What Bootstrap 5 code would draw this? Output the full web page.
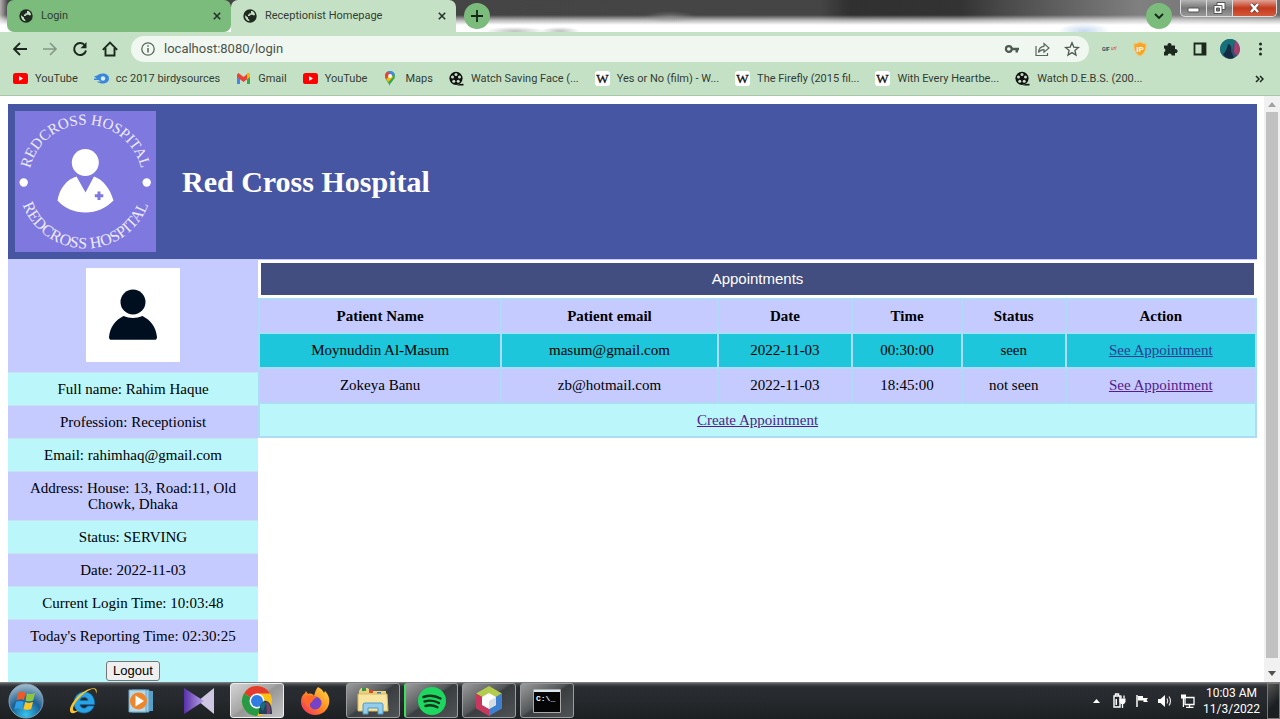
<!DOCTYPE html>
<html lang="en">
<head>
<meta charset="utf-8">
<meta name="viewport" content="width=device-width, initial-scale=1">
<title>Receptionist Homepage</title>
<link href="https://cdn.jsdelivr.net/npm/bootstrap@5.3.0/dist/css/bootstrap.min.css" rel="stylesheet">
<style>
body{font-family:Roboto,"Noto Sans",sans-serif;font-size:11px;line-height:16px;color:#333c34;background:#fff}
button{border:0;background:none;padding:0;color:inherit}
svg{display:block;flex:none}
.tabstrip{height:32px;padding-left:7px;background:
 radial-gradient(ellipse 26px 6px at 670px 17px,#9998,transparent),
 radial-gradient(ellipse 26px 8px at 1084px 31px,#a9c6e8aa,transparent),
 radial-gradient(ellipse 30px 4px at 515px 31px,#8888,transparent),
 radial-gradient(ellipse 20px 4px at 560px 31px,#8888,transparent),
 linear-gradient(#0000 15px,#fff9 20px,#fff 25px),
 linear-gradient(90deg,#b5b0b0 0,#444 8px,#454545 820px,#303030 850px,#333 960px,#484848 1000px,#808080 1140px,#6a6a6a)}
.tab-item{width:224px;height:32px;padding:0 10px 0 12px;border-radius:7px 7px 0 0}
.tab-item.idle{background:#7bbb7c;border-radius:7px}
.tab-item.current{background:#c5e1c5;width:225px}
.round-btn{width:26px;height:26px;border-radius:50%;background:#7bbb7c;margin-top:3px}
.win-btns{height:17px;border:1px solid #ddd;border-top:0;border-radius:0 0 5px 5px;overflow:hidden;background:linear-gradient(#b5b5b5,#777 50%,#999);margin-right:3px}
.win-btns button{width:26px;border-right:1px solid #ddd}
.win-btns .close-win{width:43px;border:0;background:linear-gradient(#e0a397,#c4391c 50%,#d2593a)}
.chrome-bar{background:#c5e1c5}
.toolbar{height:34px;padding:0 12px}
.omni{height:26px;border-radius:13px;background:#f0f7f1;padding:0 9px 0 9px;margin:0 13px 0 13px}
.omni input{border:0;background:none;outline:0;padding:0;font-size:13px;color:#4b554c;min-width:0}
.gap-14{gap:14px}.gap-7{gap:7px}
.marks{height:30px;padding:0 16px 4px 13px;border-bottom:1px solid #a9c4aa;gap:16px}
.marks a{color:inherit;text-decoration:none;white-space:nowrap}
.viewport{min-height:0}
.doc{padding:8px 7px 0 8px;font-family:"Liberation Serif",serif;font-size:15px;color:#000;overflow:hidden;min-width:0}
.masthead{background:#4756a2;padding:7px;gap:26px;border-bottom:1px solid #c5caff}
.masthead h1{font-size:30px;font-weight:700;line-height:34px;color:#fff;margin:0}
.side{width:250px;flex:none;text-align:center}
.side li{line-height:16px;padding:8px 16px;background:#bbf6fa;border-bottom:1px solid #c8e2ef}
.side li:nth-child(odd){background:#c5caff}
.side li.photo{padding:8px 0 10px}
.side li.exit{background:#bbf6fa}
.side .logout{font:13px/18px "Liberation Sans",sans-serif;border:1px solid #767676;border-radius:3px;background:#efefef;padding:0 6px;color:#000;display:block;margin:0 auto}
.bar-title{font:15px/32px "Liberation Sans",sans-serif;color:#fff;background:#434e80;margin:3px 3px 3px}
.appt{width:100%;border-collapse:collapse;table-layout:fixed;text-align:center}
.appt th,.appt td{border:2px solid #aedcf7;background:#c5caff;height:35px;padding:0;line-height:17px;vertical-align:middle;text-align:center}
.appt th,.appt tfoot td{height:34px}
.appt .seen td{background:#1dc6da}
.appt tfoot td{background:#bbf6fa}
.appt a{color:#551a8b;text-decoration:underline}
.appt .seen a{color:#2b3c92}
.scroller{width:16px;flex:none;background:#f1f1f1;padding:6px 2px 6px;gap:5px}
.scroller .thumb{background:#c1c1c1}
.taskbar{height:37px;background:linear-gradient(#8b8e90 0,#4a4d50 2px,#292c30 5px,#26292d 50%,#1d2023);gap:4px}
.task{width:54px;height:37px}
.task.start{width:52px}
.task.open{height:35px;border:1px solid #9a9c9e;border-radius:3px;background:linear-gradient(145deg,#9a9b9c,#55585a 45%,#3b3e41 50%,#505356)}
.task.front{background:linear-gradient(145deg,#d4d4d4,#a6a6a6 45%,#969696 50%,#c4c4c4);border-color:#eee}
.task.edge{border-left:2px solid #3ce05c}
.tray{gap:7px;color:#fff}
.clock{font-size:12px;line-height:16px;width:57px}
.show-desk{width:13px;height:36px;border:1px solid #777;background:linear-gradient(135deg,#555,#1c1f22 60%)}
</style>
</head>
<body class="vh-100 d-flex flex-column overflow-hidden">
<svg width="0" height="0" class="position-absolute" aria-hidden="true">
<defs>
<symbol id="globe" viewBox="0 0 14 14"><circle cx="7" cy="7" r="6.700" fill="#1f2a20"/><path d="M2 6.200 5 8.600v1.200l1.300 1v1.400C3.500 11.800 1.900 9.500 2 6.200zM8 2h1.500c1.500.8 2.500 2.300 2.500 4l-1.300.6-1.200-.8H7.800L6.500 7H5V5.500h1.300V4.300H8z" fill="#c5e1c5"/></symbol>
<symbol id="cross" viewBox="0 0 8 8"><path d="m.8.8 6.400 6.400M7.200.8.8 7.200" stroke="#26332a" stroke-width="1.600"/></symbol>
<symbol id="yt" viewBox="0 0 15 15"><rect y="2" width="15" height="11" rx="2.600" fill="#f00"/><path d="m6 5 4 2.500L6 10z" fill="#fff"/></symbol>
<symbol id="film" viewBox="0 0 15 15"><circle cx="7" cy="7.300" r="6.600" fill="#111"/><path d="M8 14.500h6.500v-1.800l-4 .4z" fill="#111"/><g fill="#c5e1c5"><circle cx="7" cy="3.500" r="1.500"/><circle cx="3.500" cy="6" r="1.500"/><circle cx="10.500" cy="6" r="1.500"/><circle cx="4.800" cy="10.200" r="1.500"/><circle cx="9.200" cy="10.200" r="1.500"/></g></symbol>
<symbol id="wiki" viewBox="0 0 15 15"><rect width="15" height="15" rx="3" fill="#fff"/><text x="7.500" y="12" text-anchor="middle" font-family="Liberation Serif, serif" font-size="13" fill="#111" stroke="#111" stroke-width=".3">W</text></symbol>
</defs></svg>

<div class="tabstrip d-flex align-items-start">
  <div class="tab-item idle d-flex align-items-center"><svg width="14" height="14"><use href="#globe"/></svg><span class="ms-2 me-auto">Login</span><button aria-label="Close Login"><svg width="8" height="8"><use href="#cross"/></svg></button></div>
  <div class="tab-item current d-flex align-items-center"><svg width="14" height="14"><use href="#globe"/></svg><span class="ms-2 me-auto">Receptionist Homepage</span><button aria-label="Close Receptionist Homepage"><svg width="8" height="8"><use href="#cross"/></svg></button></div>
  <button class="round-btn ms-2 d-flex align-items-center justify-content-center" aria-label="New tab"><svg width="12" height="12"><path d="M6 0v12M0 6h12" stroke="#16271a" stroke-width="1.800"/></svg></button>
  <button class="round-btn ms-auto me-2 d-flex align-items-center justify-content-center" aria-label="Search tabs"><svg width="10" height="6"><path d="m1 1 4 4 4-4" fill="none" stroke="#16271a" stroke-width="1.800"/></svg></button>
  <div class="win-btns d-flex">
    <button aria-label="Minimize"><svg class="mx-auto" width="13" height="14"><rect x="1" y="7" width="11" height="4" rx="1" fill="#fff" stroke="#555"/></svg></button>
    <button aria-label="Restore"><svg class="mx-auto" width="13" height="14"><path d="M4 1.500h8v7H4z" fill="#fff" stroke="#555"/><path d="M1 4.500h8v8H1z" fill="#fff" stroke="#555"/><path d="M3.500 7h3v3h-3z" fill="#777" stroke="#555"/></svg></button>
    <button class="close-win" aria-label="Close"><svg class="mx-auto" width="13" height="14"><path d="m3 3 7 8M10 3l-7 8" stroke="#644" stroke-width="4"/><path d="m3 3 7 8M10 3l-7 8" stroke="#fff" stroke-width="2.400"/></svg></button>
  </div>
</div>

<div class="chrome-bar">
  <div class="toolbar d-flex align-items-center">
    <div class="d-flex gap-14">
      <button aria-label="Back"><svg width="16" height="16"><path d="M15 8H2.500M8 2 2 8l6 6" fill="none" stroke="#1c281e" stroke-width="1.800"/></svg></button>
      <button aria-label="Forward"><svg width="16" height="16"><path d="M1 8h12.500M8 2l6 6-6 6" fill="none" stroke="#839884" stroke-width="1.600"/></svg></button>
      <button aria-label="Reload"><svg width="16" height="16"><path d="M13 4.500A6 6 0 1 0 14 9.500" fill="none" stroke="#1c281e" stroke-width="2"/><path d="M14.500 1v6.200H8.500z" fill="#1c281e"/></svg></button>
      <button aria-label="Home"><svg width="16" height="16"><path d="M.8 8.800 8 1.500l7.200 7.300M3.500 7v7.500h9V7" fill="none" stroke="#1c281e" stroke-width="1.900"/></svg></button>
    </div>
    <div class="omni d-flex align-items-center flex-grow-1">
      <svg width="16" height="16"><circle cx="8" cy="8" r="6.200" fill="none" stroke="#5b665c" stroke-width="1.300"/><path d="M8 7v4.500M8 4.300v1.500" stroke="#5b665c" stroke-width="1.500"/></svg>
      <input class="flex-grow-1 ms-2" type="text" value="localhost:8080/login" aria-label="Address">
      <div class="d-flex gap-14">
        <svg width="16" height="16"><circle cx="4.800" cy="8" r="2.900" fill="none" stroke="#4f5a51" stroke-width="2.200"/><path d="M8 6.800h7v2.400h-1v2.300h-2.500V9.200H8z" fill="#4f5a51"/></svg>
        <svg width="16" height="16"><path d="M2 5v9.500h11.500V12" fill="none" stroke="#5b665c" stroke-width="1.200"/><path d="M4.500 11.500c.3-3.800 2-6 5.500-6.200V2.500L15 7l-5 4.300V8.700c-2.500 0-4.200.8-5.500 2.800z" fill="none" stroke="#5b665c" stroke-width="1.200"/></svg>
        <svg width="16" height="16"><path d="m8 1.800 1.800 4.300 4.700.4-3.600 3 1.100 4.600-4-2.500-4 2.500 1.100-4.600-3.600-3 4.700-.4z" fill="none" stroke="#4f5a51" stroke-width="1.300"/></svg>
      </div>
    </div>
    <div class="d-flex gap-14">
      <svg width="16" height="16"><text x="0" y="10" font-size="5" font-weight="700" fill="#444">GIF</text><text x="9" y="9" font-size="5" font-style="italic" fill="#d33">url</text></svg>
      <svg width="16" height="16"><path d="M8 1c2 1.200 4 1.800 6 1.800.3 5.500-1 9.500-6 12.200C3 12.300 1.700 8.300 2 2.800 4 2.800 6 2.200 8 1z" fill="#f6a528" stroke="#f8c86c"/><text x="8" y="10.500" text-anchor="middle" font-size="8" font-weight="700" fill="#fff">IP</text></svg>
      <svg width="16" height="16"><path d="M2 4.500h3.600a2 2 0 1 1 3.800 0H13v3.700a2 2 0 1 1 0 3.800v2.500H9.700a2 2 0 0 0-4 0H2v-3.400a2 2 0 0 0 0-3.800z" fill="#1c281e"/></svg>
      <svg width="16" height="16"><path d="M2.500 2.500h11v11h-11z" fill="none" stroke="#1c281e" stroke-width="1.800"/><path d="M9.500 2H14v12H9.500z" fill="#1c281e"/></svg>
      <svg width="16" height="16" overflow="visible"><circle cx="8" cy="8" r="10" fill="#35506f"/><path d="M0 2a10 10 0 0 1 14-2c-3 3-3 6-4 9-4-1-7 1-9 6a10 10 0 0 1-1-13z" fill="#16717a"/><path d="M13-1c5 4 6 11 3 15-3 0-4-2-4-5z" fill="#a43f70"/><path d="M6 3c3 0 4 4 3 7l3 7c-4 2-9 0-11-4 3-2 4-6 5-10z" fill="#132c43"/></svg>
      <button aria-label="Menu"><svg width="16" height="16"><g fill="#1c281e"><circle cx="8.500" cy="3" r="1.500"/><circle cx="8.500" cy="8" r="1.500"/><circle cx="8.500" cy="13" r="1.500"/></g></svg></button>
    </div>
  </div>
  <nav class="marks d-flex align-items-center" aria-label="Bookmarks">
    <a href="#" class="d-flex align-items-center gap-7"><svg width="15" height="15"><use href="#yt"/></svg>YouTube</a>
    <a href="#" class="d-flex align-items-center gap-7"><svg width="15" height="15"><path d="M3 4.500C7 1 15 2 15 7.500S7 14 3 10.500h4L4.500 9H0V7.500h3L0 5.500z" fill="#3987dc"/><circle cx="9" cy="7.500" r="2.200" fill="#d9eefa"/></svg>cc 2017 birdysources</a>
    <a href="#" class="d-flex align-items-center gap-7"><svg width="15" height="15"><path d="M1 4h3v9H1z" fill="#4285f4"/><path d="M11 4h3v9h-3z" fill="#34a853"/><path d="M1 3.500 2.500 2 7.500 6l5-4L14 3.500V6L7.500 11 1 6z" fill="#ea4335"/><path d="M11 3.500 12.500 2 14 3.500V6l-3 2.300z" fill="#fbbc04"/></svg>Gmail</a>
    <a href="#" class="d-flex align-items-center gap-7"><svg width="15" height="15"><use href="#yt"/></svg>YouTube</a>
    <a href="#" class="d-flex align-items-center gap-7"><svg width="15" height="15" viewBox="1 0 15 15"><path d="M7.500 15C6.700 11 3 9 3 5a5 5 0 0 1 10 0c0 4-4.700 6-5.500 10z" fill="#34a853"/><path d="M3 5a5 5 0 0 1 3-4.600L9 3 4.500 8.500C3.500 7.300 3 6.200 3 5z" fill="#ea4335"/><path d="M6 .4C9 -.6 12.300 1 12.900 4L9 4z" fill="#4285f4"/><path d="M4.300 8.300 9 3l2 3-4.700 5z" fill="#fbbc04"/><circle cx="8" cy="5" r="1.900" fill="#fff"/></svg>Maps</a>
    <a href="#" class="d-flex align-items-center gap-7"><svg width="15" height="15"><use href="#film"/></svg>Watch Saving Face (...</a>
    <a href="#" class="d-flex align-items-center gap-7"><svg width="15" height="15"><use href="#wiki"/></svg>Yes or No (film) - W...</a>
    <a href="#" class="d-flex align-items-center gap-7"><svg width="15" height="15"><use href="#wiki"/></svg>The Firefly (2015 fil...</a>
    <a href="#" class="d-flex align-items-center gap-7"><svg width="15" height="15"><use href="#wiki"/></svg>With Every Heartbe...</a>
    <a href="#" class="d-flex align-items-center gap-7"><svg width="15" height="15"><use href="#film"/></svg>Watch D.E.B.S. (200...</a>
    <button class="ms-auto" aria-label="More bookmarks"><svg width="9" height="8"><path d="m1 1 3 3-3 3M5 1l3 3-3 3" fill="none" stroke="#1c281e" stroke-width="1.500"/></svg></button>
  </nav>
</div>

<div class="viewport d-flex flex-grow-1">
  <main class="doc flex-grow-1">
    <header class="masthead d-flex align-items-center">
      <svg width="141" height="141" role="img" aria-label="Redcross Hospital logo">
        <rect width="141" height="141" fill="#7f78df"/>
        <path id="arcTop" d="M13.500 70.500a57 57 0 0 1 114 0" fill="none"/>
        <path id="arcLow" d="M3.500 70.500a67 67 0 0 0 134 0" fill="none"/>
        <g fill="#eeecff" font-family="Liberation Serif, serif" text-anchor="middle">
          <text font-size="15"><textPath href="#arcTop" startOffset="50%">REDCROSS HOSPITAL</textPath></text>
          <text font-size="16"><textPath href="#arcLow" startOffset="50%">REDCROSS HOSPITAL</textPath></text>
        </g>
        <g fill="#fff"><circle cx="8.700" cy="71.500" r="4.200"/><circle cx="131.700" cy="71.500" r="4.200"/><circle cx="70.300" cy="51.500" r="13.500"/>
        <path d="M61.500 65.500 70.500 81.500 79 65.500c9 3 16 12 19.500 24-8 8-17 12-28 12s-21-4-28-12c2-12 9-21 19-24z"/></g>
        <path d="M84 80.500v8.500M79.800 84.800h8.500" stroke="#7f78df" stroke-width="3"/>
      </svg>
      <h1>Red Cross Hospital</h1>
    </header>
    <div class="d-flex align-items-start">
      <ul class="side list-unstyled mb-0">
        <li class="photo"><svg class="mx-auto" width="94" height="94" role="img" aria-label="Profile photo"><rect width="94" height="94" fill="#fff"/><circle cx="47" cy="34" r="12.500" fill="#000f20"/><path d="M37.500 48c6 2.500 13 2.500 19 0 8 4 13.500 11 14.500 21 0 2-1 2.800-2.500 2.800h-43C24 71.800 23 71 23 69c1-10 6.500-17 14.500-21z" fill="#000f20"/></svg></li>
        <li>Full name: Rahim Haque</li>
        <li>Profession: Receptionist</li>
        <li>Email: rahimhaq@gmail.com</li>
        <li>Address: House: 13, Road:11, Old Chowk, Dhaka</li>
        <li>Status: SERVING</li>
        <li>Date: 2022-11-03</li>
        <li>Current Login Time: 10:03:48</li>
        <li>Today's Reporting Time: 02:30:25</li>
        <li class="exit"><button class="logout" type="button">Logout</button></li>
      </ul>
      <section class="flex-grow-1">
        <h2 class="bar-title text-center">Appointments</h2>
        <table class="appt">
          <colgroup><col style="width:24.3%"><col style="width:21.7%"><col style="width:13.5%"><col style="width:11%"><col style="width:10.4%"><col style="width:19.1%"></colgroup>
          <thead><tr><th>Patient Name</th><th>Patient email</th><th>Date</th><th>Time</th><th>Status</th><th>Action</th></tr></thead>
          <tbody>
            <tr class="seen"><td>Moynuddin Al-Masum</td><td>masum@gmail.com</td><td>2022-11-03</td><td>00:30:00</td><td>seen</td><td><a href="#">See Appointment</a></td></tr>
            <tr><td>Zokeya Banu</td><td>zb@hotmail.com</td><td>2022-11-03</td><td>18:45:00</td><td>not seen</td><td><a href="#">See Appointment</a></td></tr>
          </tbody>
          <tfoot><tr><td colspan="6"><a href="#">Create Appointment</a></td></tr></tfoot>
        </table>
      </section>
    </div>
  </main>
  <div class="scroller d-flex flex-column align-items-center" aria-hidden="true">
    <svg width="8" height="5"><path d="M0 5 4 0l4 5z" fill="#a3a3a3"/></svg>
    <div class="thumb flex-grow-1 w-100"></div>
    <svg class="mt-2" width="8" height="5"><path d="m0 0 4 5 4-5z" fill="#505050"/></svg>
  </div>
</div>

<footer class="taskbar d-flex align-items-center flex-shrink-0">
  <button class="task start d-flex align-items-center justify-content-center" aria-label="Start"><svg width="36" height="36" viewBox="0 0 36 36"><defs><radialGradient id="orb" cx=".5" cy=".9" r=".9"><stop offset="0" stop-color="#35c5ef"/><stop offset=".5" stop-color="#1b5f94"/><stop offset="1" stop-color="#a9bfcc"/></radialGradient></defs><circle cx="18" cy="18" r="17" fill="url(#orb)" stroke="#7fa3b8"/><path d="M10 10c3-2 5-1.500 7.500-.3L16 17c-2.500-1.200-5-1-7.500.2z" fill="#ee5a25"/><path d="M19 10.300c3 1.200 5 1 8-.3l-1.800 7.500c-2.500 1.200-5 1-7.700-.1z" fill="#8cc63f"/><path d="M8 19c2.700-1.300 5-1.300 7.500-.2L14 26c-2.500-1.200-5-1-7.500.3z" fill="#2e9fe5"/><path d="M17.200 19c2.700 1.200 5 1.200 7.800.1L23.200 26c-2.800 1.200-5 1-7.700-.1z" fill="#fdc622"/></svg></button>
  <button class="task d-flex align-items-center justify-content-center" aria-label="Internet Explorer"><svg width="32" height="30" viewBox="0 0 32 30"><path d="M27 20c-2 5-6 7-10 7-6 0-10-4-10-10S11 6 17 6c7 0 11 5 10.500 12.500H13c.3 4 6 5 7.500 1.500zM13 14.500h8c-.3-4.500-7.500-4.500-8 0z" fill="#27a3e6" stroke="#1370b8" stroke-width=".7"/><path d="M29 8c3-7-4-7-11-3C10 9 2 20 3 25c1 4 6 2 9-1-8 3-7-2-3-8C14 9 23 2 27 3c2 .6 2 3 2 5z" fill="#f7c52e"/></svg></button>
  <button class="task d-flex align-items-center justify-content-center" aria-label="Media Player"><svg width="26" height="26"><path d="M7 3h18v20H7z" fill="#5b9fc6"/><path d="M4 2h17v22H4z" fill="#9ccbe4" stroke="#5b9fc6"/><path d="M1 2h17v22H1z" fill="#b6d8e9" stroke="#6aa9cb"/><circle cx="10.500" cy="13" r="8.500" fill="#f0862a"/><path d="M7.500 7.500 16 13l-8.500 5.500z" fill="#fff"/></svg></button>
  <button class="task d-flex align-items-center justify-content-center" aria-label="KMPlayer"><svg width="32" height="28"><defs><linearGradient id="km"><stop offset="0" stop-color="#5730a8"/><stop offset="1" stop-color="#b9a4e8"/></linearGradient></defs><path d="M31 1 15 14l16 13z" fill="#cfc6e2"/><path d="m1 1 20 13L1 27z" fill="url(#km)"/></svg></button>
  <button class="task open front d-flex align-items-center justify-content-center" aria-label="Chrome"><svg width="32" height="32" viewBox="0 0 32 32"><circle cx="16" cy="16" r="15" fill="#fbc116"/><path d="M16 16 3 8.500A15 15 0 0 1 29 8.500H16z" fill="#e33b2e"/><path d="M3 8.500A15 15 0 0 0 16 31l6.500-11.500L16 16z" fill="#269a45"/><circle cx="16" cy="16" r="7.500" fill="#fff"/><circle cx="16" cy="16" r="6" fill="#2f7de1"/><path d="M18 29c0-5 1-11 5-13 5-1 8 4 8 13z" fill="#263f59"/><path d="M25 17c4 1 5 6 4 12h-3z" fill="#7a4167"/><path d="M19 22c1-4 4-6 6-4l-3 8z" fill="#14707a"/></svg></button>
  <button class="task d-flex align-items-center justify-content-center" aria-label="Firefox"><svg width="30" height="30" viewBox="0 0 30 30"><defs><linearGradient id="fx" x1="1" x2="0" y2="1"><stop offset="0" stop-color="#ffe14a"/><stop offset=".5" stop-color="#ff8a1e"/><stop offset="1" stop-color="#f0246a"/></linearGradient></defs><path d="M18 1c4 2 5 4 6 6l1-2c4 4 5 9 4 13-2 7-7 11-14 11S1 23 1 16c0-4 1-7 4-9l1-2 2 3c3-1 5 0 6 2 1-4 2-7 4-9z" fill="url(#fx)"/><circle cx="15" cy="17" r="6.500" fill="#7542c9"/><path d="M6 10c4-2 9 0 11 2-3 0-4 2-5 4-3 1-3 5 1 7-6-1-9-7-7-13z" fill="#ff6a2b"/></svg></button>
  <button class="task open d-flex align-items-center justify-content-center" aria-label="Explorer"><svg width="32" height="28"><path d="M2 4 4 1h7l2 3h16v19H2z" fill="#ecd07b"/><path d="M5 1h4v3H5z" fill="#2a9b4a"/><path d="M12 3h4v3h-4z" fill="#d64a30"/><path d="M20 5h4v3h-4z" fill="#3a86c8"/><path d="M1 7h29l1 17H1z" fill="#f7e5a1" stroke="#d9bb62"/><path d="M6 27V18q0-2 2-2h16q2 0 2 2v9h-5v-6H11v6z" fill="#94cdeb" stroke="#4c9bc8"/></svg></button>
  <button class="task open edge d-flex align-items-center justify-content-center" aria-label="Spotify"><svg width="28" height="28"><circle cx="14" cy="14" r="14" fill="#1ed760"/><path d="M5.500 10c6-2 12-1.300 17 1.500M6.500 14.500c5-1.500 10-1 14.500 1.500M7.500 19c4-1.200 8-.8 12 1.200" fill="none" stroke="#10341c" stroke-width="2.400" stroke-linecap="round"/></svg></button>
  <button class="task open d-flex align-items-center justify-content-center" aria-label="NetBeans"><svg width="28" height="30"><path d="m14 0 13 7.500-6 4-7-4-7 4-6-4z" fill="#b4cc4e"/><path d="M1 7.500 7.500 11v8l6.500 4v7L1 22.500z" fill="#c8375d"/><path d="m27 7.500-6.500 3.500v8L14 23v7l13-7.500z" fill="#3f7fd0"/><path d="m14 7 7 4v8l-7 4-7-4v-8z" fill="#fff"/><path d="m14 15 7-4v8l-7 4z" fill="#d8dde4"/></svg></button>
  <button class="task open d-flex align-items-center justify-content-center" aria-label="Command prompt"><svg width="28" height="24"><path d="M.5.500h27v23H.5z" fill="#050505" stroke="#aaa"/><path d="M1 1h26v2H1z" fill="#dce6ee"/><text x="3" y="12" font-family="Liberation Mono, monospace" font-size="8" font-weight="700" fill="#fff">C:\_</text></svg></button>
  <div class="tray d-flex align-items-center ms-auto">
    <svg width="16" height="16"><path d="m5 10 3.500-4 3.500 4z" fill="#fff"/></svg>
    <svg width="16" height="16"><path d="M3 3h6v11H3zM4.500 1h3v2h-3z" fill="none" stroke="#fff" stroke-width="1.400"/><path d="M4.500 6v6h1.500V6zM8.500 5.500h6V9l-1.500 2h-3L8.500 9z" fill="#fff"/><path d="M10 2.500v3M13 2.500v3M11.500 11v4" stroke="#fff" stroke-width="1.300"/></svg>
    <svg width="16" height="16"><path d="M3 2v12" stroke="#fff" stroke-width="1.500"/><path d="M4 3h5v2h5l-1.500 2L14 9H9.500V7.500H4z" fill="#fff"/></svg>
    <svg width="16" height="16"><path d="M1 6h2.500L8 2v12L3.500 10H1z" fill="#fff"/><path d="M10 5.500q1.500 2.500 0 5M12 3.500q3 4.500 0 9" fill="none" stroke="#ddd" stroke-width="1.200"/></svg>
    <svg width="16" height="16"><path d="M5 4.500h9v7H5zM9.500 12v2M6 14.300h7.500" fill="none" stroke="#fff" stroke-width="1.300"/><path d="M1 1.500h5v4H4V14H2.800V5.500H1z" fill="#fff"/></svg>
    <div class="clock text-center">10:03 AM<br>11/3/2022</div>
    <button class="show-desk" aria-label="Show desktop"></button>
  </div>
</footer>
<script src="https://cdn.jsdelivr.net/npm/bootstrap@5.3.0/dist/js/bootstrap.bundle.min.js"></script>
</body>
</html>
